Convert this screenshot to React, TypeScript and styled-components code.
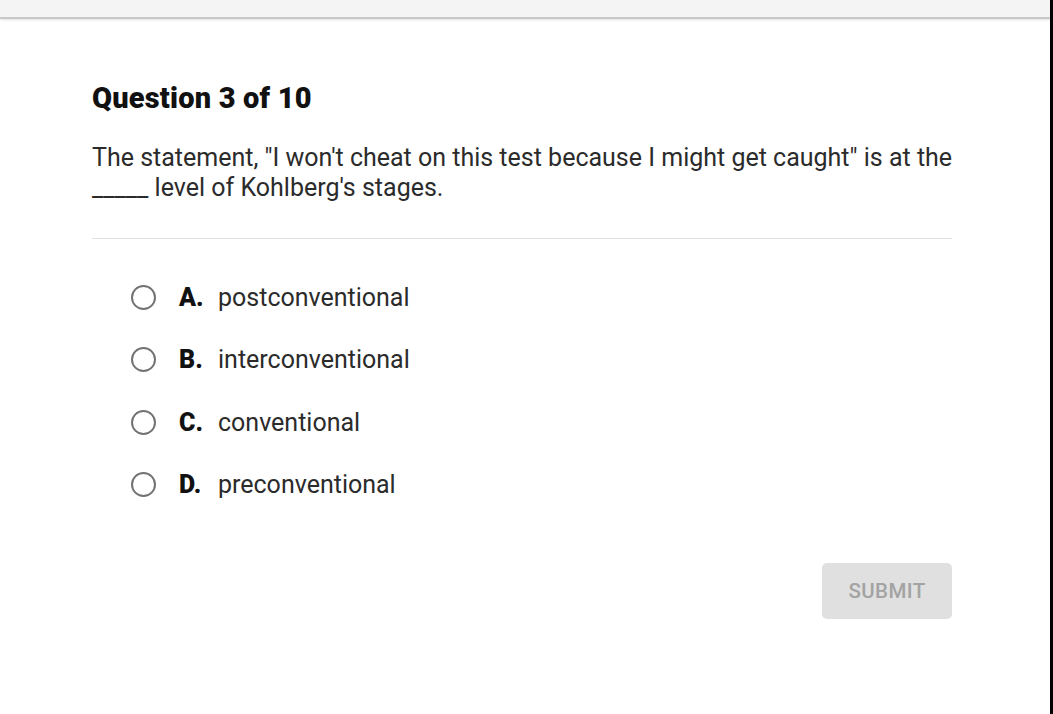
import * as React from "react";
import styled, { createGlobalStyle } from "styled-components";

const GlobalStyle = createGlobalStyle`
  html, body {
    margin: 0;
    padding: 0;
    background: #000;
  }
  body {
    font-family: Roboto, "Liberation Sans", Arial, sans-serif;
  }
`;

const Page = styled.div`
  width: 1050px;
  height: 714px;
  background: #ffffff;
  display: flex;
  flex-direction: column;
  overflow: hidden;
`;

const TopBar = styled.div`
  height: 17px;
  flex: 0 0 17px;
  background: #f4f4f4;
  border-bottom: 2px solid #c9c9c9;
  box-shadow: 0 1px 2px rgba(0, 0, 0, 0.12);
`;

const Content = styled.main`
  width: 860px;
  padding: 63px 0 0 92px;
  display: flex;
  flex-direction: column;
`;

const Heading = styled.h2`
  margin: 0;
  font-size: 29px;
  line-height: 32px;
  font-weight: 900;
  color: #111;
  letter-spacing: 0.2px;
`;

const Prompt = styled.p`
  margin: 29px 0 0 0;
  font-size: 25px;
  line-height: 30px;
  color: #2b2b2b;
  white-space: nowrap;
`;

const Divider = styled.hr`
  margin: 35px 0 0 0;
  border: none;
  height: 1px;
  background: #e3e3e3;
`;

const Options = styled.div`
  display: flex;
  flex-direction: column;
  gap: 30.6px;
  padding: 42px 0 0 39px;
`;

const Option = styled.label`
  display: flex;
  align-items: center;
  height: 32px;
  cursor: pointer;
`;

const Radio = styled.span`
  width: 21px;
  height: 21px;
  border: 2.5px solid #737373;
  border-radius: 50%;
  flex: 0 0 auto;
  margin-right: 23px;
`;

const Letter = styled.span`
  font-size: 25px;
  font-weight: 900;
  color: #111;
  width: 39px;
`;

const OptionText = styled.span`
  font-size: 25px;
  color: #2b2b2b;
`;

const Footer = styled.div`
  display: flex;
  justify-content: flex-end;
  margin-top: 62px;
`;

const SubmitButton = styled.button`
  width: 130px;
  height: 56px;
  border: none;
  border-radius: 5px;
  background: #e0e0e0;
  color: #a3a3a3;
  font-family: Roboto, "Liberation Sans", Arial, sans-serif;
  font-size: 20.5px;
  font-weight: 500;
  letter-spacing: 0.4px;
  cursor: default;
`;

const options = [
  { letter: "A.", text: "postconventional" },
  { letter: "B.", text: "interconventional" },
  { letter: "C.", text: "conventional" },
  { letter: "D.", text: "preconventional" },
];

const App = (): JSX.Element => {
  return (
    <>
      <GlobalStyle />
      <Page>
        <TopBar />
        <Content>
          <Heading>Question 3 of 10</Heading>
          <Prompt>
            The statement, "I won't cheat on this test because I might get caught" is at the
            <br />
            _____ level of Kohlberg's stages.
          </Prompt>
          <Divider />
          <Options>
            {options.map((o) => (
              <Option key={o.letter}>
                <Radio />
                <Letter>{o.letter}</Letter>
                <OptionText>{o.text}</OptionText>
              </Option>
            ))}
          </Options>
          <Footer>
            <SubmitButton disabled>SUBMIT</SubmitButton>
          </Footer>
        </Content>
      </Page>
    </>
  );
};

export default App;
